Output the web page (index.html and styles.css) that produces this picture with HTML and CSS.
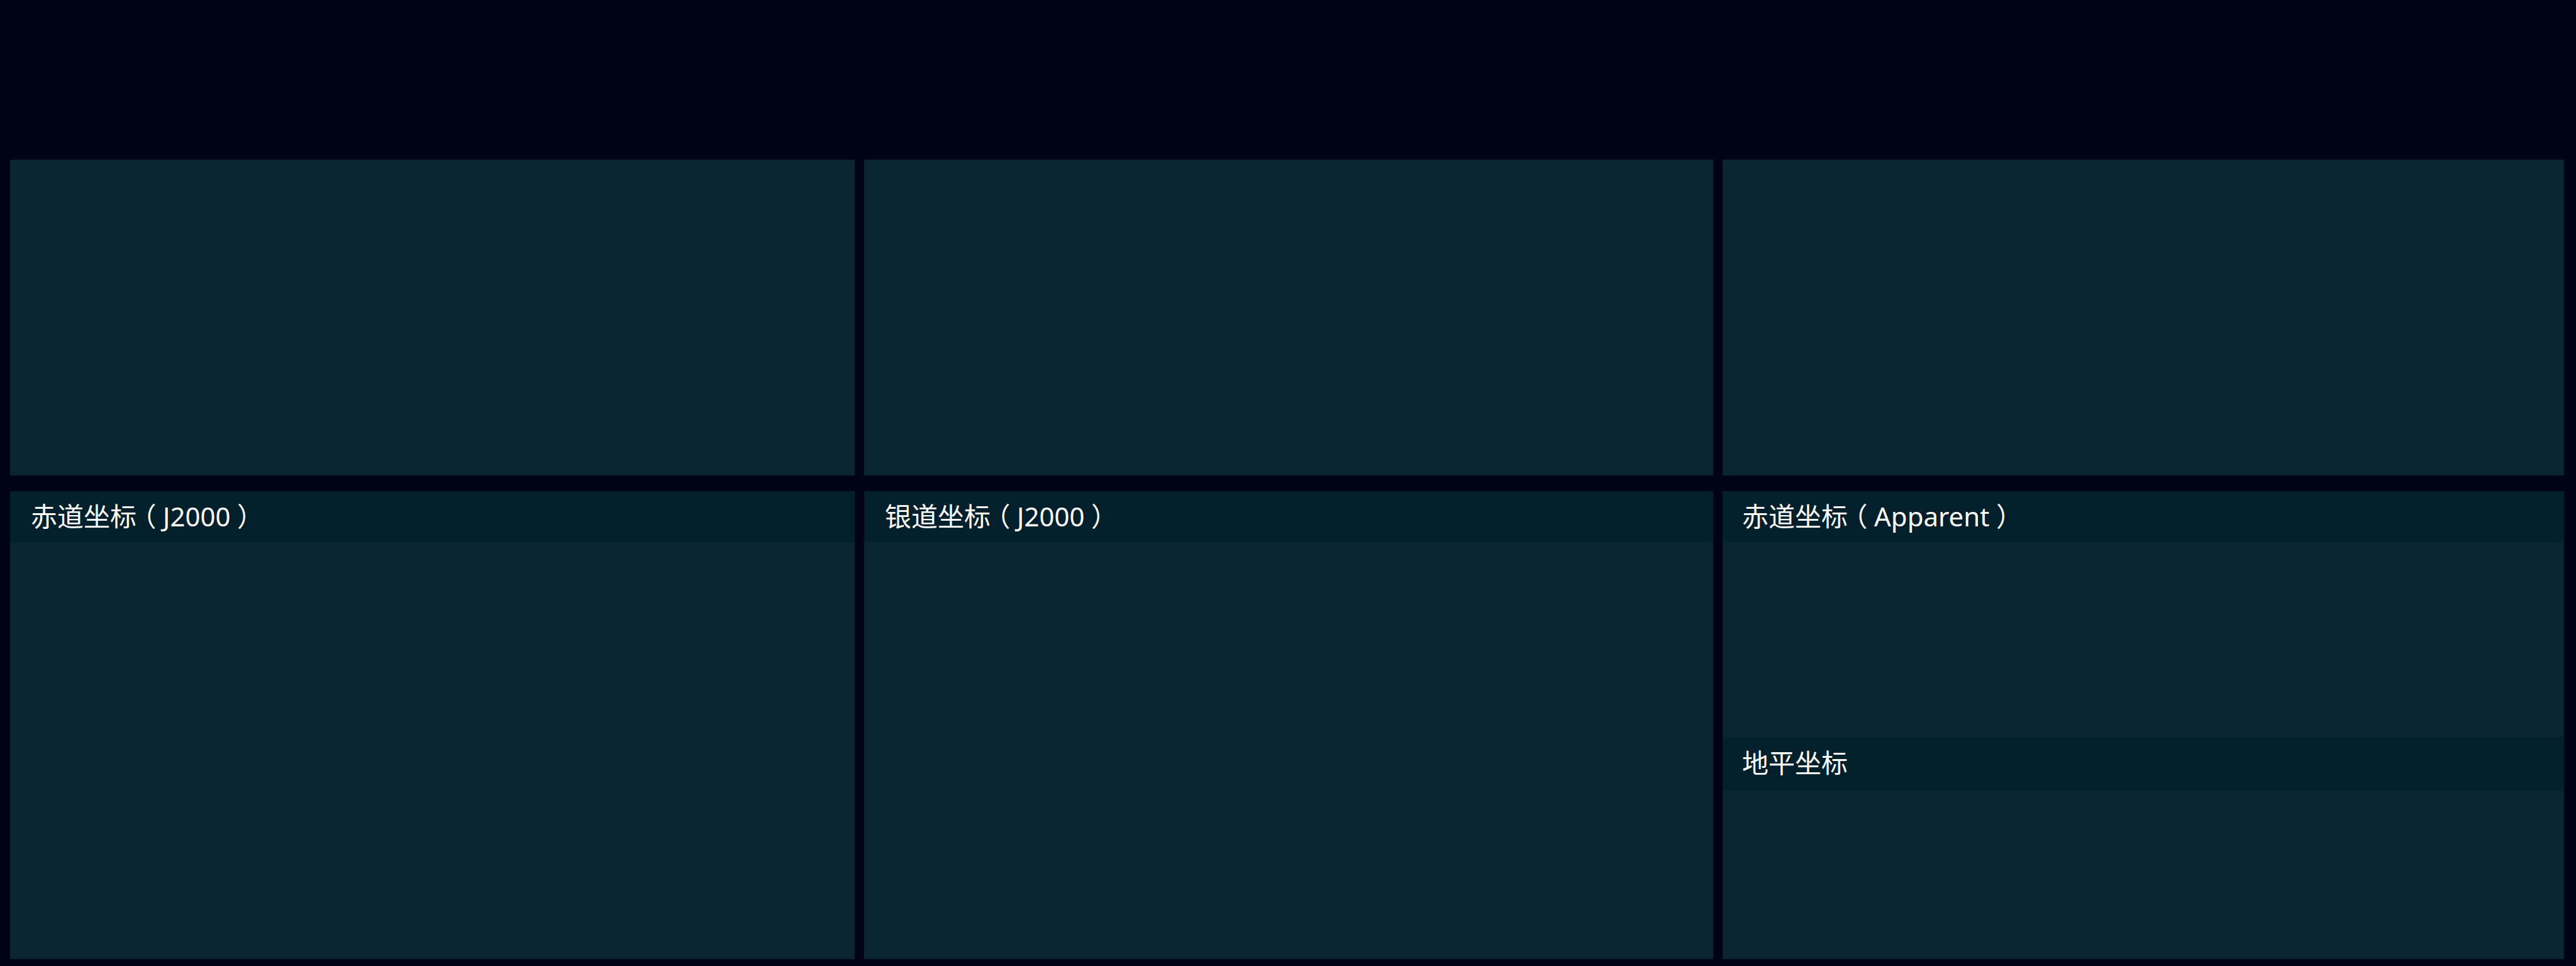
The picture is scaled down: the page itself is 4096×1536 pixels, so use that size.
FILE: index.html
```html
<!DOCTYPE html>
<html lang="zh-CN">
<head>
<meta charset="utf-8">
<meta name="viewport" content="width=device-width, initial-scale=1">
<title>坐标</title>
<link rel="stylesheet" href="styles.css">
</head>
<body>
<header class="banner"></header>
<main class="board">
  <section class="panel"></section>
  <section class="panel"></section>
  <section class="panel"></section>
  <section class="panel">
    <h2 class="title">赤道坐标<span class="paren">（</span>J2000<span class="paren">）</span></h2>
  </section>
  <section class="panel">
    <h2 class="title">银道坐标<span class="paren">（</span>J2000<span class="paren">）</span></h2>
  </section>
  <div class="panel split">
    <section class="part">
      <h2 class="title">赤道坐标<span class="paren">（</span>Apparent<span class="paren">）</span></h2>
    </section>
    <section class="part">
      <h2 class="title">地平坐标</h2>
    </section>
  </div>
</main>
</body>
</html>
```
FILE: styles.css
```css
* {
  box-sizing: border-box;
}

body {
  display: flex;
  flex-direction: column;
  min-height: 100vh;
  margin: 0;
  background: #000316;
  color: #fff;
  font-family: "Noto Sans", "Noto Sans CJK SC", sans-serif;
}

.banner {
  height: 254px;
}

.board {
  flex: 1;
  display: grid;
  grid-template-columns: 1343fr 1350fr 1338fr;
  grid-template-rows: 502fr 744fr;
  gap: 25px 15px;
  padding: 0 19px 11px 16px;
}

.panel {
  background: #092532;
}

.split {
  display: grid;
  grid-template-rows: 392fr 352fr;
}

.title {
  height: 80px;
  margin: 0;
  padding: 0 33px;
  background: #021f2c;
  font-size: 42px;
  font-weight: 400;
  line-height: 80px;
}

.split .title {
  padding: 0 31px;
}

.part + .part .title {
  height: 84px;
}

/* Full-width brackets, centred in their cell */
.paren {
  display: inline-block;
  width: 1em;
  text-align: center;
  font-feature-settings: "halt";
}
```
